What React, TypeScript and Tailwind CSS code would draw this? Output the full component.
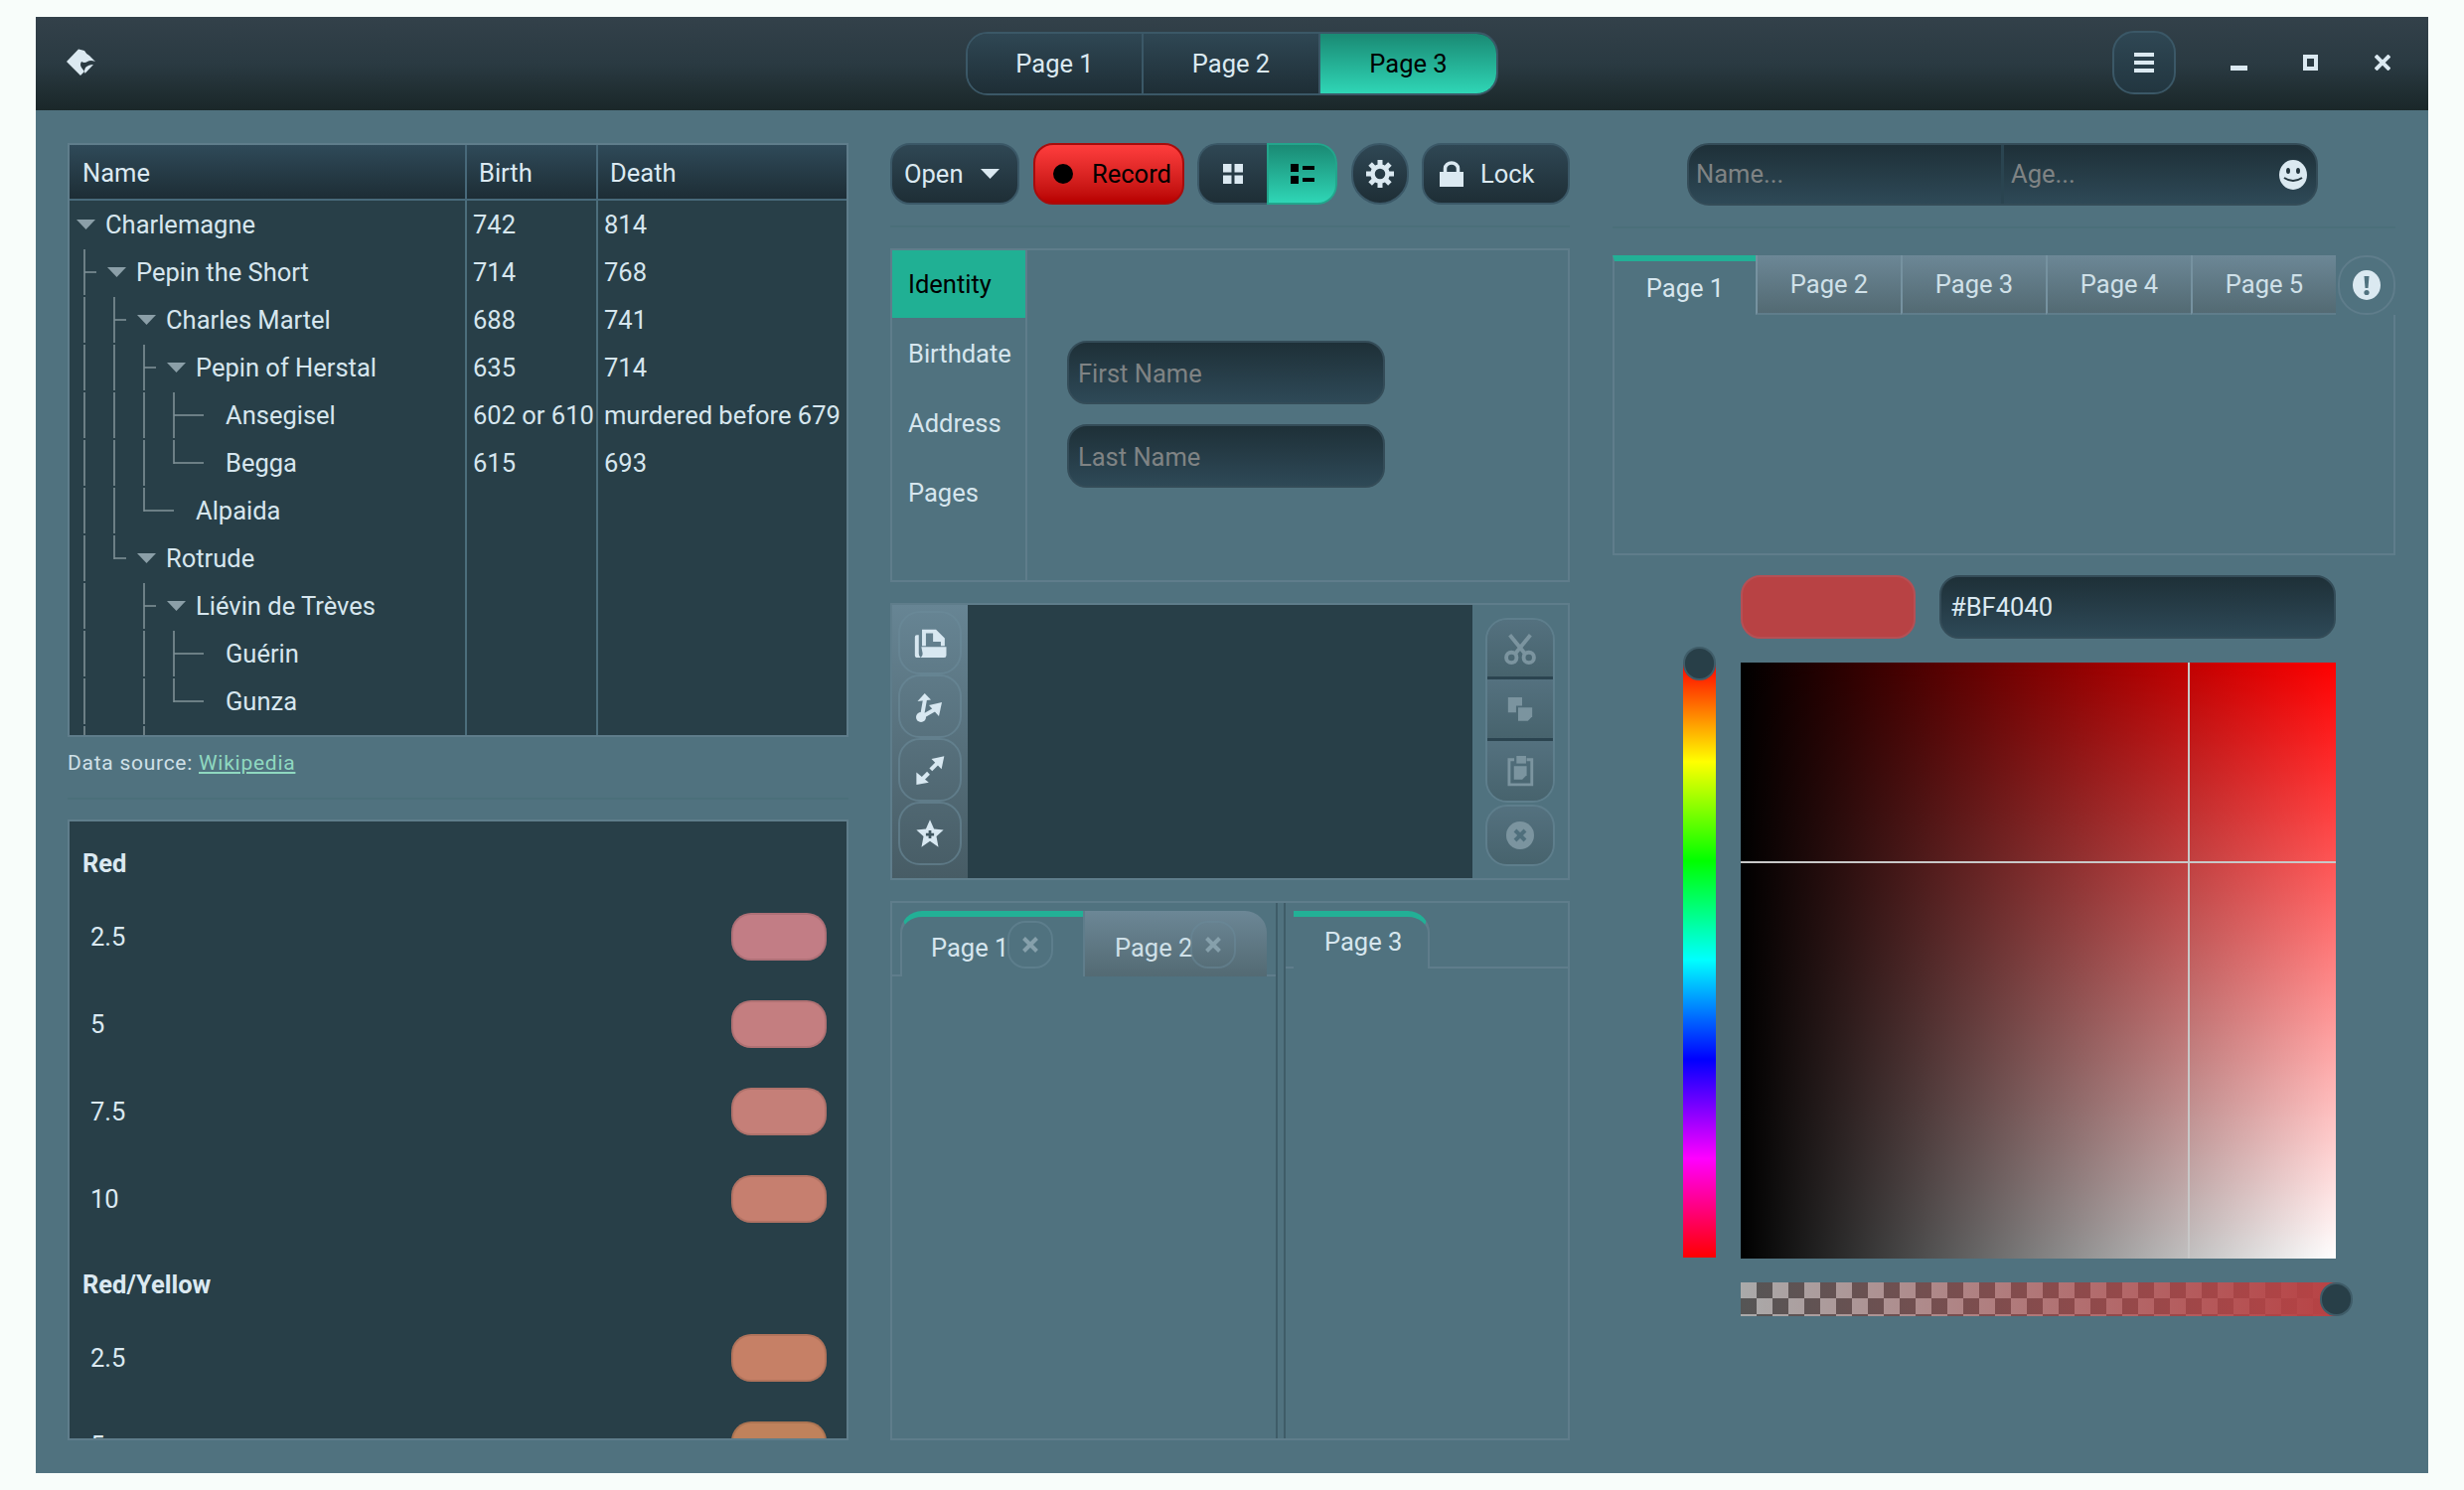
import React from "react";

const darkButton =
  "border-2 border-[#3b5867] bg-linear-to-b from-[#2f4754] to-[#1e2e36] text-[#dbe9f1]";
const darkInput =
  "border-2 border-[#344c58] bg-linear-to-b from-[#1e3038] to-[#2e4957]";
const tealFill = "bg-linear-to-b from-[#1a8a74] to-[#2fd6b6] text-black";
const idleTab =
  "bg-linear-to-b from-[#6c8796] to-[#536a73] text-[#cfe0e8]";
const panelBorder = "border-2 border-[#5f7d8b]";

const treeRows = [
  { name: "Charlemagne", birth: "742", death: "814", level: 0, open: true },
  { name: "Pepin the Short", birth: "714", death: "768", level: 1, open: true },
  { name: "Charles Martel", birth: "688", death: "741", level: 2, open: true },
  { name: "Pepin of Herstal", birth: "635", death: "714", level: 3, open: true },
  { name: "Ansegisel", birth: "602 or 610", death: "murdered before 679", level: 4 },
  { name: "Begga", birth: "615", death: "693", level: 4 },
  { name: "Alpaida", birth: "", death: "", level: 3 },
  { name: "Rotrude", birth: "", death: "", level: 2, open: true },
  { name: "Liévin de Trèves", birth: "", death: "", level: 3, open: true },
  { name: "Guérin", birth: "", death: "", level: 4 },
  { name: "Gunza", birth: "", death: "", level: 4 },
  { name: "", birth: "", death: "", level: 0 },
];

const indents = ["pl-[7px]", "pl-[38px]", "pl-[68px]", "pl-[98px]", "pl-[128px]"];

// [x, first row, last row, row with the corner or -1]
const guideRuns = [
  [15, 1, 11, -1],
  [45, 2, 6, 7],
  [75, 3, 5, 6],
  [75, 8, 11, -1],
  [105, 4, 4, 5],
  [105, 9, 9, 10],
];
// [x, row, length]
const guideTicks = [
  [15, 1, 12],
  [45, 2, 12],
  [75, 3, 12],
  [105, 4, 30],
  [105, 5, 30],
  [75, 6, 30],
  [45, 7, 12],
  [75, 8, 12],
  [105, 9, 30],
  [105, 10, 30],
];

const TreeGuides = () => {
  const lines: React.ReactNode[] = [];
  guideRuns.forEach(([x, from, to, corner]) => {
    for (let r = from; r <= to; r++) {
      lines.push(<line key={`${x}-${r}`} x1={x} x2={x} y1={r * 48 + 1} y2={r * 48 + 47} />);
    }
    if (corner >= 0) {
      lines.push(<line key={`${x}-c${corner}`} x1={x} x2={x} y1={corner * 48 + 1} y2={corner * 48 + 25} />);
    }
  });
  guideTicks.forEach(([x, r, len]) => {
    lines.push(<line key={`t${x}-${r}`} x1={x} x2={x + len} y1={r * 48 + 24} y2={r * 48 + 24} />);
  });
  return (
    <svg className="absolute left-0 top-0" width="140" height="538" stroke="#7e9096" strokeWidth="1.6">
      {lines}
    </svg>
  );
};

const Expander = ({ hidden }: { hidden?: boolean }) => (
  <svg width="19" height="10" viewBox="0 0 19 10" className="shrink-0 mr-[10px]">
    {!hidden && <path d="M0 0H19L9.5 10Z" fill="#8b9fa8" />}
  </svg>
);

const TreeTable = () => (
  <div className={`${panelBorder} h-[598px] bg-[#283f48] flex flex-col overflow-hidden`}>
    <div className="h-[56px] shrink-0 grid grid-cols-[400px_132px_1fr] border-b-2 border-[#48697a] bg-linear-to-b from-[#2f4a59] to-[#1d2d35] text-[#dbe9f1]">
      <div className="flex items-center pl-[13px] pt-[2px] border-r-2 border-[#48697a]">Name</div>
      <div className="flex items-center pl-[12px] pt-[2px] border-r-2 border-[#48697a]">Birth</div>
      <div className="flex items-center pl-[12px] pt-[2px]">Death</div>
    </div>
    <div className="relative flex-1 overflow-hidden text-[#d6e6ee]">
      <TreeGuides />
      {treeRows.map((row, i) => (
        <div key={i} className="h-[48px] grid grid-cols-[400px_132px_1fr]">
          <div className={`flex items-center border-r-2 border-[#4c6e7c] whitespace-nowrap ${indents[row.level]}`}>
            {row.name && <Expander hidden={!row.open} />}
            {row.name}
          </div>
          <div className="flex items-center pl-[6px] border-r-2 border-[#4c6e7c] whitespace-nowrap">{row.birth}</div>
          <div className="flex items-center pl-[6px] whitespace-nowrap">{row.death}</div>
        </div>
      ))}
    </div>
  </div>
);

const ColorRow = ({ label, swatch }: { label: string; swatch: string }) => (
  <div className="h-[88px] shrink-0 flex items-center justify-between pl-[21px] pr-[20px]">
    <span>{label}</span>
    <div className={`w-[96px] h-[48px] rounded-[20px] border-2 border-black/10 ${swatch}`} />
  </div>
);

const ColorList = () => (
  <div className={`${panelBorder} h-[625px] bg-[#283f48] overflow-hidden text-[#dbe9f1] flex flex-col`}>
    <div className="h-[72px] shrink-0 flex items-center pt-[12px] pl-[13px] font-bold">Red</div>
    <ColorRow label="2.5" swatch="bg-[#c27d85]" />
    <ColorRow label="5" swatch="bg-[#c47e80]" />
    <ColorRow label="7.5" swatch="bg-[#c57f78]" />
    <ColorRow label="10" swatch="bg-[#c67f6f]" />
    <div className="h-[72px] shrink-0 flex items-center pt-[12px] pl-[13px] font-bold">Red/Yellow</div>
    <ColorRow label="2.5" swatch="bg-[#c68066]" />
    <ColorRow label="5" swatch="bg-[#c0825c]" />
  </div>
);

const TitleBar = () => (
  <div className="h-[94px] shrink-0 relative flex items-center justify-center bg-linear-to-b from-[#33414a] via-[#2a3a42] to-[#1a2729] text-[#dbe9f1]">
    {/* logo */}
    <svg className="absolute left-[24px] top-[23px]" width="44" height="44" viewBox="0 0 44 44" fill="#dbe9f1">
      <path d="M7 22L19 9.5L25 11Q27 15 30 16L36 22Q31 20 28 22Q25 24 22 22Q20 25 22 28L25 32L21 36Z" />
      <path d="M26 28Q29 25 34 25L25.5 34Q24 31 26 28Z" />
    </svg>
    <div className="flex h-[64px] w-[536px] rounded-[22px] border-2 border-[#3b5867] overflow-hidden">
      <div className="w-[177px] flex items-center justify-center bg-linear-to-b from-[#2f4754] to-[#1e2e36] border-r-2 border-[#3b5867]">Page 1</div>
      <div className="w-[178px] flex items-center justify-center bg-linear-to-b from-[#2f4754] to-[#1e2e36] border-r-2 border-[#3b5867]">Page 2</div>
      <div className={`flex-1 flex items-center justify-center ${tealFill}`}>Page 3</div>
    </div>
    <div className="absolute right-[254px] top-[14px] w-[64px] h-[64px] rounded-[22px] border-2 border-[#3b5867] bg-linear-to-b from-[#2f4754] to-[#223640] flex flex-col items-center justify-center gap-[4px]">
      <span className="w-[20px] h-[4px] bg-[#dbe9f1]" />
      <span className="w-[20px] h-[4px] bg-[#dbe9f1]" />
      <span className="w-[20px] h-[4px] bg-[#dbe9f1]" />
    </div>
    <div className="absolute right-[38px] top-[38px] flex items-start">
      <span className="w-[17px] h-[5px] mt-[11px] bg-[#dbe9f1]" />
      <span className="w-[15px] h-[16px] ml-[56px] border-[4px] border-[#dbe9f1]" />
      <svg width="16" height="16" viewBox="0 0 16 16" className="ml-[57px]" stroke="#dbe9f1" strokeWidth="4">
        <path d="M1 1L15 15M15 1L1 15" />
      </svg>
    </div>
  </div>
);

const Gear = () => (
  <svg width="28" height="28" viewBox="0 0 28 28" fill="#dbe9f1">
    {[0, 45, 90, 135, 180, 225, 270, 315].map((deg) => (
      <rect key={deg} x="11.5" y="0" width="5" height="7" transform={`rotate(${deg} 14 14)`} />
    ))}
    <circle cx="14" cy="14" r="7.5" fill="none" stroke="#dbe9f1" strokeWidth="4.5" />
  </svg>
);

const Toolbar = () => (
  <div className="h-[62px] flex items-stretch">
    <div className={`${darkButton} w-[130px] rounded-[20px] flex items-center pl-[12px]`}>
      Open
      <svg width="19" height="10" viewBox="0 0 19 10" className="ml-[18px]">
        <path d="M0 0H19L9.5 10Z" fill="#dbe9f1" />
      </svg>
    </div>
    <div className="ml-[14px] w-[152px] rounded-[20px] border-2 border-[#a80c0c] bg-linear-to-b from-[#ff3d3d] to-[#b80000] flex items-center pl-[18px] text-black">
      <span className="w-[20px] h-[20px] rounded-full bg-black mr-[19px]" />
      Record
    </div>
    <div className="ml-[13px] w-[141px] flex rounded-[20px] overflow-hidden">
      <div className="w-[70px] border-2 border-r-0 rounded-l-[20px] border-[#3b5867] bg-linear-to-b from-[#2f4754] to-[#1e2e36] flex items-center justify-center">
        <svg width="20" height="20" viewBox="0 0 20 20" fill="#dbe9f1">
          <path d="M0 0h8.5v8.5H0zM11.5 0H20v8.5h-8.5zM0 11.5h8.5V20H0zM11.5 11.5H20V20h-8.5z" />
        </svg>
      </div>
      <div className={`flex-1 rounded-r-[20px] border-2 border-[#23a58c] flex items-center justify-center ${tealFill}`}>
        <svg width="24" height="20" viewBox="0 0 24 20" fill="#000">
          <path d="M0 0h8v8H0zM0 12h8v8H0zM12 2h12v4H12zM12 14h12v4H12z" />
        </svg>
      </div>
    </div>
    <div className={`${darkButton} ml-[14px] w-[58px] rounded-full flex items-center justify-center`}>
      <Gear />
    </div>
    <div className={`${darkButton} ml-[13px] w-[149px] rounded-[20px] flex items-center pl-[16px]`}>
      <svg width="24" height="26" viewBox="0 0 24 26" className="mr-[17px]">
        <path d="M0 11h24v15H0z" fill="#dbe9f1" />
        <path d="M5.5 12V7.5a6.5 5.5 0 0 1 13 0V12" fill="none" stroke="#dbe9f1" strokeWidth="3.5" />
      </svg>
      Lock
    </div>
  </div>
);

const FormPanel = () => (
  <div className={`${panelBorder} h-[336px] flex text-[#d6e6ee]`}>
    <div className="w-[136px] border-r-2 border-[#5f7d8b] flex flex-col">
      <div className="h-[68px] bg-[#20b094] text-black flex items-center pl-[16px]">Identity</div>
      <div className="h-[72px] flex items-center pl-[16px]">Birthdate</div>
      <div className="h-[69px] flex items-center pl-[16px]">Address</div>
      <div className="h-[71px] flex items-center pl-[16px]">Pages</div>
    </div>
    <div className="flex-1 flex flex-col gap-[20px] pt-[91px] pl-[40px]">
      <div className={`${darkInput} w-[320px] h-[64px] rounded-[20px] flex items-center pl-[9px] pt-[2px] text-[#7f8384]`}>First Name</div>
      <div className={`${darkInput} w-[320px] h-[64px] rounded-[20px] flex items-center pl-[9px] pt-[2px] text-[#7f8384]`}>Last Name</div>
    </div>
  </div>
);

const ToolIcon = ({ children }: { children: React.ReactNode }) => (
  <div className="w-[64px] h-[64px] rounded-[22px] border-2 border-[#6a8a99]/60 flex items-center justify-center">
    {children}
  </div>
);

const EditorPanel = () => (
  <div className={`${panelBorder} h-[279px] flex`}>
    <div className="w-[76px] shrink-0 flex flex-col items-center pt-[6px] bg-linear-to-b from-[#678594] to-[#475c65]">
      <ToolIcon>
        <svg width="33" height="31" viewBox="58 60 100 95" fill="#d8e8f1">
          <path fillRule="evenodd" d="M82 65H125L152 92V116H82ZM94 77H116V103H140V116H94Z" />
          <path d="M125 78L140 92H125Z" />
          <path d="M80 119H157V145Q157 152 150 152H78Q84 148 84 140Z" />
          <path d="M60 88q0-6 6-6h6V140q0 8 6 12H68q-8 0-8-8Z" />
        </svg>
      </ToolIcon>
      <ToolIcon>
        <svg width="32" height="32" viewBox="0 0 32 32" fill="#d8e8f1" stroke="#d8e8f1">
          <circle cx="7" cy="27" r="5" stroke="none" />
          <path d="M8 26L11 9M9 26L23 18" strokeWidth="4" fill="none" />
          <path d="M10.7 3L3.5 11L17 9.5Z" stroke="none" />
          <path d="M28 12L15 15L25 26Z" stroke="none" />
        </svg>
      </ToolIcon>
      <ToolIcon>
        <svg width="32" height="32" viewBox="60 445 95 95" fill="#d8e8f1">
          <path d="M150 452L112 460L142 490Z" />
          <path d="M135 467L110 492" stroke="#d8e8f1" strokeWidth="12" />
          <path d="M67 537V500L104 530Z" />
          <path d="M80 525L103 502" stroke="#d8e8f1" strokeWidth="12" />
        </svg>
      </ToolIcon>
      <ToolIcon>
        <svg width="30" height="30" viewBox="64 638 88 88">
          <path d="M108 642L120 669L148 672L127 691L133 722L108 705L83 722L89 691L68 672L96 669Z" fill="#d8e8f1" />
          <path d="M108 673V697M96 685H120" stroke="#3f5660" strokeWidth="8" />
        </svg>
      </ToolIcon>
    </div>
    <div className="flex-1 bg-[#283f48]" />
    <div className="w-[96px] shrink-0 flex flex-col pt-[13px] pl-[13px]">
      <div className="w-[70px] h-[186px] rounded-[22px] border-2 border-[#5e7e8c] overflow-hidden flex flex-col">
        <div className="h-[60px] flex items-center justify-center bg-linear-to-b from-[#54717f] to-[#47636d] border-b-[3px] border-[#2b4450]">
          <svg width="36" height="34" viewBox="65 60 110 105" fill="none" stroke="#7b949f" strokeWidth="12">
            <circle cx="93" cy="140" r="16" />
            <circle cx="147" cy="140" r="16" />
            <path d="M88 70L135 128M152 70L105 128" />
          </svg>
        </div>
        <div className="h-[62px] flex items-center justify-center bg-linear-to-b from-[#54717f] to-[#47636d] border-b-[3px] border-[#2b4450]">
          <svg width="26" height="25" viewBox="82 262 76 74" fill="#7b949f">
            <path d="M84 265H126V290H108V310H84Z" />
            <path d="M114 295H156V322L143 335H114Z" />
          </svg>
        </div>
        <div className="flex-1 flex items-center justify-center bg-linear-to-b from-[#54717f] to-[#47636d]">
          <svg width="27" height="32" viewBox="76 436 84 98" fill="none" stroke="#7b949f" strokeWidth="9">
            <path d="M98 450H82V528H153V450H137" />
            <path d="M105 438H135V462H105Z" fill="#7b949f" stroke="none" />
            <path d="M97 470H137V498L123 512H97Z" fill="#7b949f" stroke="none" />
          </svg>
        </div>
      </div>
      <div className="mt-[2px] w-[70px] h-[62px] rounded-[22px] border-2 border-[#5e7e8c] bg-linear-to-b from-[#54717f] to-[#47636d] flex items-center justify-center">
        <svg width="28" height="28" viewBox="0 0 28 28">
          <circle cx="14" cy="14" r="14" fill="#7b949f" />
          <path d="M9 9L19 19M19 9L9 19" stroke="#4f6f7c" strokeWidth="4" />
        </svg>
      </div>
    </div>
  </div>
);

const CloseChip = ({ place }: { place: string }) => (
  <div className={`absolute w-[46px] h-[48px] rounded-[18px] border-2 border-[#6a8a99]/50 flex items-center justify-center ${place}`}>
    <svg width="16" height="16" viewBox="0 0 16 16" stroke="#86a0ab" strokeWidth="4">
      <path d="M1.5 1.5L14.5 14.5M14.5 1.5L1.5 14.5" />
    </svg>
  </div>
);

const DockPanel = () => (
  <div className={`${panelBorder} h-[543px] flex text-[#d6e6ee]`}>
    <div className="w-[386px] shrink-0 pt-[8px] flex flex-col">
      <div className="flex h-[66px] items-stretch">
        <div className="w-[8px] border-b-2 border-[#5f7d8b]" />
        <div className="relative w-[184px] flex items-center pl-[29px] pt-[2px] whitespace-nowrap rounded-tl-[22px] border-l-2 border-t-[6px] border-l-[#5f7d8b] border-t-[#22b096]">
          Page 1
          <CloseChip place="right-[30px] top-[4px]" />
        </div>
        <div className={`relative w-[185px] flex items-center pl-[30px] pt-[8px] whitespace-nowrap rounded-tr-[22px] border-l-2 border-[#5f7d8b] ${idleTab}`}>
          Page 2
          <CloseChip place="right-[31px] top-[10px]" />
        </div>
        <div className="flex-1 border-b-2 border-[#5f7d8b]" />
      </div>
    </div>
    <div className="w-[10px] shrink-0 border-x-2 border-[#3f5c68]" />
    <div className="flex-1 pt-[8px]">
      <div className="flex h-[58px] items-stretch">
        <div className="w-[8px] border-b-2 border-[#5f7d8b]" />
        <div className="w-[137px] flex items-center pl-[31px] pb-[2px] rounded-tr-[22px] border-r-2 border-t-[6px] border-r-[#5f7d8b] border-t-[#22b096]">
          Page 3
        </div>
        <div className="flex-1 border-b-2 border-[#5f7d8b]" />
      </div>
    </div>
  </div>
);

const SearchField = () => (
  <div className={`${darkInput} ml-[75px] w-[635px] h-[63px] rounded-[22px] flex text-[#7f8384]`}>
    <div className="w-[317px] flex items-center pl-[7px] border-r-[3px] border-[#2a4450]">Name...</div>
    <div className="flex-1 flex items-center pl-[7px]">
      Age...
      <svg width="28" height="30" viewBox="0 0 28 30" className="ml-auto mr-[9px]">
        <ellipse cx="14" cy="15" rx="14" ry="15" fill="#dbe9f1" />
        <ellipse cx="9" cy="11" rx="2" ry="3" fill="#24363e" />
        <ellipse cx="19" cy="11" rx="2" ry="3" fill="#24363e" />
        <path d="M5 18Q14 24 23 18" stroke="#24363e" strokeWidth="2" fill="none" />
      </svg>
    </div>
  </div>
);

const PagesTabs = () => (
  <div className="h-[302px] flex flex-col text-[#d6e6ee]">
    <div className="h-[60px] shrink-0 flex items-stretch">
      <div className="w-[144px] flex items-center justify-center border-l-2 border-t-[6px] border-l-[#5f7d8b] border-t-[#22b096]">Page 1</div>
      {["Page 2", "Page 3", "Page 4", "Page 5"].map((p) => (
        <div key={p} className={`w-[146px] flex items-center justify-center border-l-2 border-[#7692a0] border-b-2 border-b-[#5f7d8b] ${idleTab}`}>
          {p}
        </div>
      ))}
      <div className="ml-[2px] w-[58px] rounded-[28px] border-2 border-[#5f7d8b] flex items-center justify-center">
        <svg width="28" height="30" viewBox="0 0 28 30">
          <ellipse cx="14" cy="15" rx="14" ry="15" fill="#dbe9f1" />
          <path d="M11.5 6h5l-1 12h-3z" fill="#50727f" />
          <circle cx="14" cy="22.5" r="2.6" fill="#50727f" />
        </svg>
      </div>
    </div>
    <div className="flex-1 border-2 border-t-0 border-[#5f7d8b]" />
  </div>
);

const ColorPicker = () => (
  <div className="flex pl-[71px] mt-[20px]">
    <div className="relative w-[33px] h-[599px] mt-[88px] bg-[linear-gradient(to_bottom,#f00,#ff0,#0f0,#0ff,#00f,#f0f,#f00)]">
      <div className="absolute left-0 -top-[16px] w-[33px] h-[34px] rounded-full bg-[#283f48] border-2 border-[#3f5c68]" />
    </div>
    <div className="ml-[25px] w-[599px]">
      <div className="flex gap-[24px] h-[64px]">
        <div className="w-[176px] rounded-[20px] bg-[#b84244] border-2 border-[#b55055]" />
        <div className={`${darkInput} flex-1 rounded-[20px] flex items-center pl-[9px] text-[#dbe9f1]`}>#BF4040</div>
      </div>
      <div className="relative mt-[24px] h-[600px] bg-[image:linear-gradient(to_right,#000,transparent),linear-gradient(to_bottom,#f00,#fff)]">
        <div className="absolute left-[450px] top-0 bottom-0 w-[2px] bg-[#c8c8c8]" />
        <div className="absolute top-[200px] left-0 right-0 h-[2px] bg-[#c8c8c8]" />
      </div>
      <div className="relative mt-[24px] h-[34px] w-[600px] bg-[image:linear-gradient(to_right,rgba(191,64,64,0),#b84244),repeating-conic-gradient(#555_0_25%,#aaa_0_50%)] bg-[length:100%_100%,32px_32px]">
        <div className="absolute -right-[16px] top-0 w-[33px] h-[34px] rounded-full bg-[#283f48] border-2 border-[#3f5c68]" />
      </div>
    </div>
  </div>
);

const App = () => (
  <div
    className="w-[2480px] h-[1500px] pt-[17px] pl-[36px] bg-[#f8fdfa] text-[25.5px] overflow-hidden"
    style={{ fontFamily: "Roboto, sans-serif" }}
  >
    <div className="w-[2408px] h-[1466px] flex flex-col bg-[#50727f]">
      <TitleBar />
      <div className="flex-1 flex pt-[33px] pl-[32px]">
        {/* left column */}
        <div className="w-[786px] shrink-0 flex flex-col">
          <TreeTable />
          <div className="h-[63px] flex items-center pb-[8px] text-[21px] tracking-[0.035em] text-[#cfe0e8] border-b-2 border-[#4b6f7a]">
            Data source:&nbsp;
            <span className="underline text-[#8fd8c0]">Wikipedia</span>
          </div>
          <div className="h-[20px]" />
          <ColorList />
        </div>
        {/* middle column */}
        <div className="w-[684px] ml-[42px] shrink-0 flex flex-col">
          <Toolbar />
          <div className="mt-[21px] h-[2px] bg-[#4b6f7a]" />
          <div className="mt-[21px]">
            <FormPanel />
          </div>
          <div className="mt-[21px]">
            <EditorPanel />
          </div>
          <div className="mt-[21px]">
            <DockPanel />
          </div>
        </div>
        {/* right column */}
        <div className="w-[788px] ml-[43px] shrink-0 flex flex-col">
          <SearchField />
          <div className="mt-[21px] h-[2px] bg-[#4b6f7a]" />
          <div className="mt-[27px]">
            <PagesTabs />
          </div>
          <ColorPicker />
        </div>
      </div>
    </div>
  </div>
);

export default App;
